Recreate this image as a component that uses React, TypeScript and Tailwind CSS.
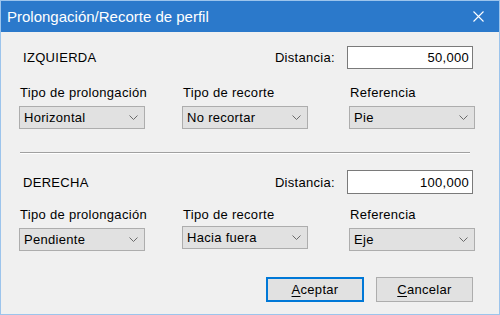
const font = { fontFamily: '"Liberation Sans", Arial, sans-serif' };

function Chevron() {
  return (
    <svg width="9" height="5" viewBox="0 0 9 5" className="shrink-0">
      <polyline points="0.5,0.5 4.5,4.5 8.5,0.5" fill="none" stroke="#6a6a6a" strokeWidth="1" />
    </svg>
  );
}

function Combo({ value, className = '' }: { value: string; className?: string }) {
  return (
    <div
      className={`flex h-[23px] w-[126px] items-center justify-between border border-[#adadad] bg-[#e1e1e1] pl-[4px] pr-[6px] ${className}`}
    >
      <span className="leading-[15px]">{value}</span>
      <Chevron />
    </div>
  );
}

function Field({ label, value, comboClass = 'mt-[6px]' }: { label: string; value: string; comboClass?: string }) {
  return (
    <div className="flex w-[126px] flex-col">
      <div className="h-[15px] whitespace-nowrap pl-[1px] leading-[15px]">{label}</div>
      <Combo value={value} className={comboClass} />
    </div>
  );
}

function DistanceRow({ side, value, height }: { side: string; value: string; height: string }) {
  return (
    <div className={`flex ${height} items-center`}>
      <div className="flex-1 pl-[4px] leading-[15px]">{side}</div>
      <div className="mr-[12px] leading-[15px]">Distancia:</div>
      <div className={`flex ${height} w-[126px] items-center justify-end border border-[#7a7a7a] bg-white pr-[3px]`}>
        <span className="leading-[15px]">{value}</span>
      </div>
    </div>
  );
}

function Button({ label, primary }: { label: string; primary?: boolean }) {
  return (
    <div
      className={`flex h-[25px] items-center justify-center bg-[#e1e1e1] ${
        primary ? 'w-[98px] border-2 border-[#0078d7]' : 'w-[97px] border border-[#adadad]'
      }`}
    >
      <span className="leading-[15px]">
        <span className="underline underline-offset-2">{label[0]}</span>
        {label.slice(1)}
      </span>
    </div>
  );
}

export default function App() {
  return (
    <div
      style={font}
      className="flex h-[315px] w-[500px] flex-col border border-[#9cc4ec] bg-[#f0f0f0] text-[13px] text-black"
    >
      <div className="flex h-[31px] shrink-0 items-center justify-between bg-[#2b79cb] pl-[6px] pr-[15px]">
        <span className="text-[15px] leading-[17px] text-white">Prolongación/Recorte de perfil</span>
        <svg width="11" height="11" viewBox="0 0 11 11">
          <path d="M0.5 0.5 L10.5 10.5 M10.5 0.5 L0.5 10.5" stroke="white" strokeWidth="1.1" />
        </svg>
      </div>

      <div className="flex flex-col pl-[18px] pr-[26px] tracking-[0.3px]">
        <div className="mt-[14px]">
          <DistanceRow side="IZQUIERDA" value="50,000" height="h-[23px]" />
        </div>
        <div className="mt-[16px] flex gap-[39px]">
          <Field label="Tipo de prolongación" value="Horizontal" />
          <div className="-ml-[2px] mr-[2px]">
            <Field label="Tipo de recorte" value="No recortar" />
          </div>
          <Field label="Referencia" value="Pie" />
        </div>

        <div className="ml-[1px] mt-[23px] w-[450px] border-t border-b border-t-[#a0a0a0] border-b-white" />

        <div className="mt-[16px]">
          <DistanceRow side="DERECHA" value="100,000" height="h-[24px]" />
        </div>
        <div className="mt-[13px] flex gap-[39px]">
          <Field label="Tipo de prolongación" value="Pendiente" />
          <div className="-ml-[2px] mr-[2px]">
            <Field label="Tipo de recorte" value="Hacia fuera" comboClass="mt-[4px]" />
          </div>
          <Field label="Referencia" value="Eje" />
        </div>

        <div className="mt-[26px] flex justify-end gap-[12px]">
          <Button label="Aceptar" primary />
          <Button label="Cancelar" />
        </div>
      </div>
    </div>
  );
}
